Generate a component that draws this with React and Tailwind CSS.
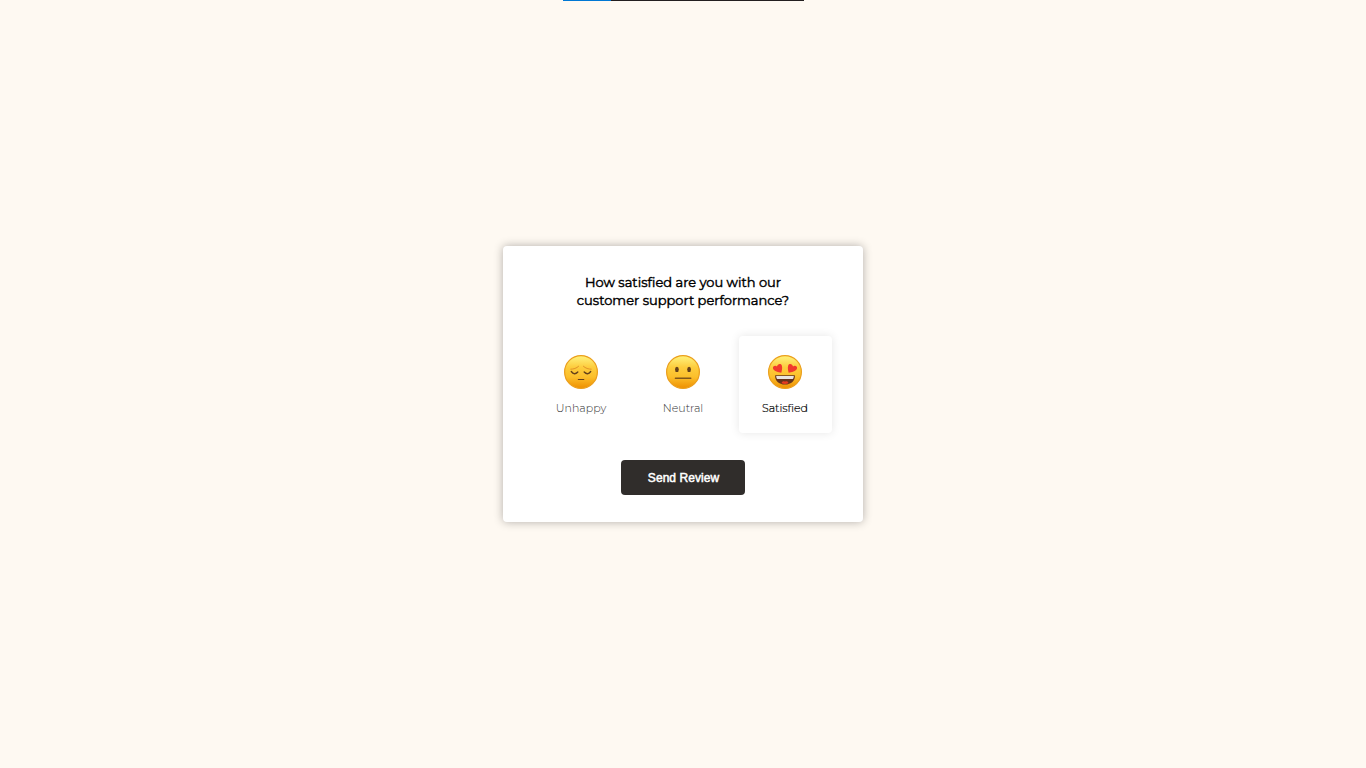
import React from "react";

function Face({ id, children }) {
  return (
    <svg viewBox="0 0 34 34" className="block h-[34px] w-[34px]" aria-hidden="true">
      <defs>
        <linearGradient id={id} x1="0" y1="0" x2="0" y2="1">
          <stop offset="0" stopColor="#fff176" />
          <stop offset="0.12" stopColor="#fee76a" />
          <stop offset="0.35" stopColor="#fdcd3e" />
          <stop offset="0.65" stopColor="#fcbf2b" />
          <stop offset="1" stopColor="#ee8f00" />
        </linearGradient>
      </defs>
      <circle cx="17" cy="17" r="16.4" fill={`url(#${id})`} stroke="#eb9e1c" strokeWidth="1.2" />
      {children}
    </svg>
  );
}

function Unhappy() {
  return (
    <Face id="face-unhappy">
      <g fill="none" strokeLinecap="round">
        <path d="M6.8 14.2C9.5 14.2 12.5 13.3 14.6 11.3M27.2 14.2C24.5 14.2 21.5 13.3 19.4 11.3" stroke="#e2942a" strokeWidth="1" />
        <path d="M7.3 16.5Q10.3 20.8 13.8 17.1M26.7 16.5Q23.7 20.8 20.2 17.1" stroke="#65411a" strokeWidth="1.4" />
        <path d="M14.3 24.5H19.8" stroke="#65411a" strokeWidth="1.1" />
      </g>
    </Face>
  );
}

function Neutral() {
  return (
    <Face id="face-neutral">
      <ellipse cx="10.9" cy="14.4" rx="1.9" ry="2.7" fill="#65401a" />
      <ellipse cx="23.1" cy="14.4" rx="1.9" ry="2.7" fill="#65401a" />
      <path d="M9.4 23.2H24.8" stroke="#80571a" strokeWidth="1.4" strokeLinecap="round" />
    </Face>
  );
}

function Satisfied() {
  return (
    <Face id="face-satisfied">
      <path d="M13.3 17.7C10.7 17.4 5.8 16.4 5 13.5C4.4 11.2 7.3 9.9 9 11.5C9.5 8.7 12.9 8.1 13.8 10.5C14.5 12.5 14 15.4 13.3 17.7Z" fill="#f13a2d" />
      <path d="M20.7 17.7C23.3 17.4 28.2 16.4 29 13.5C29.6 11.2 26.7 9.9 25 11.5C24.5 8.7 21.1 8.1 20.2 10.5C19.5 12.5 20 15.4 20.7 17.7Z" fill="#f13a2d" />
      <path d="M7.2 20.2H26.8C27.4 25.7 23.2 29.5 17 29.5S6.6 25.7 7.2 20.2Z" fill="#65331c" />
      <path d="M8.2 20.9H25.8C25.8 22.8 25.2 24 24.1 24H9.9C8.8 24 8.2 22.8 8.2 20.9Z" fill="#e9e4e0" />
      <path d="M13.5 28.3C14.1 26.1 15.7 25.9 17 26.7C18.3 25.9 19.9 26.1 20.5 28.3Q17 29.7 13.5 28.3Z" fill="#e73b20" />
    </Face>
  );
}

const ratings = [
  { label: "Unhappy", icon: <Unhappy />, text: "text-[#333333]", box: "" },
  { label: "Neutral", icon: <Neutral />, text: "text-[#333333]", box: "" },
  { label: "Satisfied", icon: <Satisfied />, text: "text-black [-webkit-text-stroke:0.2px_black]", box: "shadow-[0_0_10px_rgba(0,0,0,0.1)]" },
];

export default function App() {
  return (
    <div className="flex h-screen flex-col items-center overflow-hidden bg-[#fef9f2] font-['Montserrat','Inter',sans-serif]">
      <div className="-mb-px flex h-px w-[241px] shrink-0 bg-[#231f20]">
        <div className="w-12 bg-[#0078d4]" />
      </div>
      <main className="my-auto flex h-[276px] w-[360px] shrink-0 flex-col items-center rounded-[4px] bg-white pt-[27px] shadow-[0_0_10px_rgba(0,0,0,0.3)]">
        <h1 className="flex flex-col items-center text-[13px] leading-[18px] font-normal whitespace-nowrap text-black [-webkit-text-stroke:0.45px_black]">
          <span>How satisfied are you with our</span>
          <span>customer support performance?</span>
        </h1>
        <div className="mt-[27px] ml-px grid grid-cols-[93px_93px_93px] gap-[9px]">
          {ratings.map((r) => (
            <button key={r.label} type="button" className={`flex h-[97px] flex-col items-center rounded-[4px] pt-[19px] pr-px ${r.box}`}>
              {r.icon}
              <span className={`mt-3 text-[11px] leading-[14px] font-light ${r.text}`}>{r.label}</span>
            </button>
          ))}
        </div>
        <button type="button" className="mt-[27px] h-[35px] w-[124px] rounded-[4px] bg-[#302d2b] pl-px font-['Liberation_Sans',Arial,sans-serif] text-[12px] font-normal tracking-[0.05px] text-white [-webkit-text-stroke:0.5px_white]">
          Send Review
        </button>
      </main>
    </div>
  );
}
